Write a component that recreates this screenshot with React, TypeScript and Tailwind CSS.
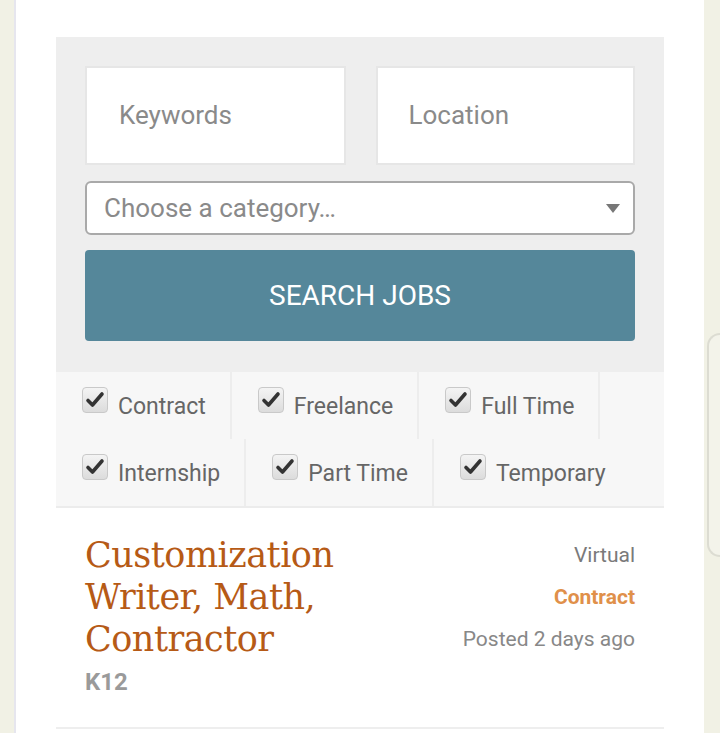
import React from "react";

const types = [
  ["Contract", "Freelance", "Full Time"],
  ["Internship", "Part Time", "Temporary"],
];

const Check = () => (
  <span className="mt-[15px] flex h-[26px] w-[26px] shrink-0 items-center justify-center rounded-[4px] border border-[#c9c9c9] bg-gradient-to-b from-[#f4f4f4] to-[#dcdcdc]">
    <svg viewBox="0 0 20 20" className="h-[20px] w-[20px]">
      <path d="M3 10.5 L7.5 15 L17 4" fill="none" stroke="#333" strokeWidth="3.6" strokeLinecap="round" strokeLinejoin="round" />
    </svg>
  </span>
);

const App = () => {
  return (
    <div className="flex min-h-[733px] w-full bg-[#f1f1e5] font-['Roboto',sans-serif]">
      <div className="w-[14px] shrink-0" />
      <div className="w-[2px] shrink-0 bg-[#e6e6ee]" />
      <div className="flex-1 bg-white px-[40px] pt-[37px]">
        <div className="bg-[#eeeeee] px-[29px] pt-[29px] pb-[31px]">
          <div className="flex gap-[30px]">
            <div className="flex h-[99px] flex-1 items-center border-2 border-[#e6e6e6] bg-white pl-[32px] text-[26px] text-[#8a8a8a]">
              Keywords
            </div>
            <div className="flex h-[99px] flex-1 items-center border-2 border-[#e6e6e6] bg-white pl-[31px] text-[26px] text-[#8a8a8a]">
              Location
            </div>
          </div>
          <div className="mt-[16px] flex h-[54px] items-center justify-between rounded-[6px] border-2 border-[#a9a9a9] bg-white pl-[17px] pr-[13px] text-[26px] text-[#8a8a8a]">
            <span>Choose a category…</span>
            <svg viewBox="0 0 14 9" className="h-[9px] w-[14px]">
              <path d="M0 0 H14 L7 9 Z" fill="#777" />
            </svg>
          </div>
          <div className="mt-[15px] flex h-[91px] items-center justify-center rounded-[4px] bg-[#55879a] text-[28px] text-white">
            SEARCH JOBS
          </div>
        </div>
        <div className="border-b-2 border-[#ececec] bg-[#f7f7f7]">
          {types.map((row, i) => (
            <div key={i} className="flex h-[67px]">
              {row.map((t, j) => (
                <div
                  key={t}
                  className={
                    i === 1 && j === row.length - 1
                      ? "flex gap-[10px] pl-[26px] pr-[24px] text-[23px] text-[#666]"
                      : "flex gap-[10px] border-r-2 border-[#ededed] pl-[26px] pr-[24px] text-[23px] text-[#666]"
                  }
                >
                  <Check />
                  <span className="mt-[21px] leading-[27px]">{t}</span>
                </div>
              ))}
            </div>
          ))}
        </div>
        <div className="flex justify-between border-b-2 border-[#eeeeee] px-[29px] pt-[26px] pb-[31px]">
          <div>
            <div className="font-['DejaVu_Serif',serif] text-[35px] leading-[42px] tracking-[-0.5px] text-[#b65a16]">
              Customization
              <br />
              Writer, Math,
              <br />
              Contractor
            </div>
            <div className="mt-[8px] text-[24px] font-bold leading-[28px] text-[#9a9a9a]">K12</div>
          </div>
          <div className="flex flex-col items-end text-[21px] leading-[42px]">
            <span className="text-[#7a7a7a]">Virtual</span>
            <span className="font-bold text-[#e0904a]">Contract</span>
            <span className="text-[#888]">Posted 2 days ago</span>
          </div>
        </div>
      </div>
      <div className="w-[16px] shrink-0 pt-[333px]">
        <div className="ml-[3px] h-[224px] rounded-l-[22px] border-2 border-r-0 border-[#dcdcd2] bg-[#f3f3ea]" />
      </div>
    </div>
  );
};

export default App;
